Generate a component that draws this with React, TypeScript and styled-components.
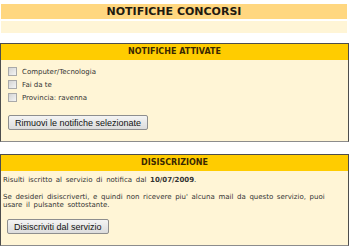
import React from 'react';
import styled, { createGlobalStyle } from 'styled-components';

const GlobalStyle = createGlobalStyle`
  html, body {
    margin: 0;
    padding: 0;
    background: #ffffff;
  }
  body {
    font-family: 'DejaVu Sans', Verdana, sans-serif;
    color: #333333;
  }
`;

const Page = styled.div`
  width: 349px;
  padding-top: 4px;
`;

const TitleBar = styled.h1`
  margin: 0 2px 0 1px;
  height: 15px;
  line-height: 15px;
  background: #ffd780;
  font-size: 11px;
  font-weight: bold;
  text-align: center;
  color: #1f1a10;
`;

const CreamBand = styled.div`
  margin: 2px 2px 0 1px;
  height: 12px;
  background: #fff5d6;
`;

const Box = styled.section<{ $top: number }>`
  margin-top: ${(p) => p.$top}px;
  border: 1px solid #4d4d4d;
  border-bottom-color: #8c8c8c;
  background: #fff5d6;
`;

const BoxHeader = styled.h2`
  margin: 0;
  height: 16px;
  line-height: 16px;
  background: #ffcc00;
  font-size: 8px;
  font-weight: bold;
  text-align: center;
  color: #3a2800;
`;

const BoxBody = styled.div<{ $left: number }>`
  padding: 5px 6px 11px ${(p) => p.$left}px;
`;

const CheckList = styled.ul`
  list-style: none;
  margin: 0 0 11px 0;
  padding: 0;
  font-size: 7px;
`;

const CheckRow = styled.li`
  display: flex;
  align-items: center;
  gap: 5px;
  height: 13px;
`;

const Check = styled.input`
  appearance: none;
  margin: 0;
  width: 9px;
  height: 9px;
  border: 1px solid #a9a9a9;
  background: linear-gradient(135deg, #d4d4d4, #f4f4f4);
`;

const Text = styled.p<{ $gap?: number }>`
  margin: 0 0 ${(p) => p.$gap ?? 0}px 0;
  max-width: 334px;
  font-size: 7px;
  line-height: 8px;
  word-spacing: 1.4px;
`;

const Button = styled.button<{ $left?: number }>`
  display: block;
  height: 15px;
  margin-left: ${(p) => p.$left ?? 0}px;
  padding: 0 6px;
  font-family: 'Liberation Sans', Arial, sans-serif;
  font-size: 9px;
  color: #111111;
  border: 1px solid #8e8e8e;
  border-radius: 2px;
  background: linear-gradient(#f4f4f4, #dcdcdc);
`;

export default function App() {
  return (
    <>
      <GlobalStyle />
      <Page>
        <TitleBar>NOTIFICHE CONCORSI</TitleBar>
        <CreamBand />
        <Box $top={10}>
          <BoxHeader>NOTIFICHE ATTIVATE</BoxHeader>
          <BoxBody $left={7}>
            <CheckList>
              {['Computer/Tecnologia', 'Fai da te', 'Provincia: ravenna'].map((it) => (
                <CheckRow key={it}>
                  <Check type="checkbox" />
                  <span>{it}</span>
                </CheckRow>
              ))}
            </CheckList>
            <Button>Rimuovi le notifiche selezionate</Button>
          </BoxBody>
        </Box>
        <Box $top={12}>
          <BoxHeader>DISISCRIZIONE</BoxHeader>
          <BoxBody $left={2}>
            <Text $gap={9}>
              Risulti iscritto al servizio di notifica dal <b>10/07/2009</b>.
            </Text>
            <Text $gap={10}>
              Se desideri disiscriverti, e quindi non ricevere piu' alcuna mail da questo servizio, puoi
              usare il pulsante sottostante.
            </Text>
            <Button $left={4}>Disiscriviti dal servizio</Button>
          </BoxBody>
        </Box>
      </Page>
    </>
  );
}
